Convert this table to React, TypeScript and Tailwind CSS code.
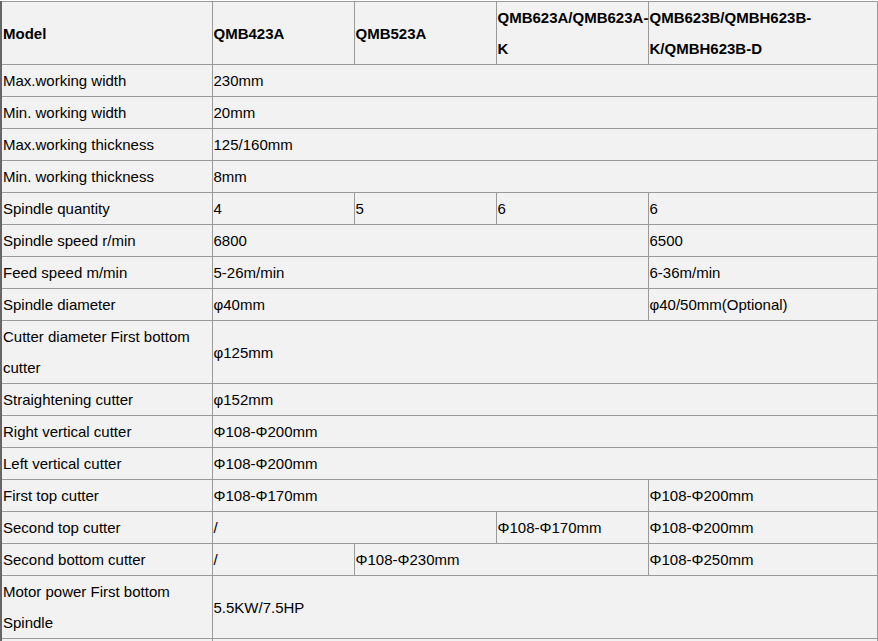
import React from "react";

type Cell = { t: React.ReactNode; span?: number };
type Row = { label: React.ReactNode; cells: Cell[]; h?: string };

const rows: Row[] = [
  { label: "Max.working width", cells: [{ t: "230mm", span: 4 }] },
  { label: "Min. working width", cells: [{ t: "20mm", span: 4 }] },
  { label: "Max.working thickness", cells: [{ t: "125/160mm", span: 4 }] },
  { label: "Min. working thickness", cells: [{ t: "8mm", span: 4 }] },
  { label: "Spindle quantity", cells: [{ t: "4" }, { t: "5" }, { t: "6" }, { t: "6" }] },
  { label: "Spindle speed r/min", cells: [{ t: "6800", span: 3 }, { t: "6500" }] },
  { label: "Feed speed m/min", cells: [{ t: "5-26m/min", span: 3 }, { t: "6-36m/min" }] },
  { label: "Spindle diameter", cells: [{ t: "φ40mm", span: 3 }, { t: "φ40/50mm(Optional)" }] },
  {
    label: (
      <>
        Cutter diameter First bottom
        <br />
        cutter
      </>
    ),
    cells: [{ t: "φ125mm", span: 4 }],
  },
  { label: "Straightening cutter", cells: [{ t: "φ152mm", span: 4 }] },
  { label: "Right vertical cutter", cells: [{ t: "Φ108-Φ200mm", span: 4 }] },
  { label: "Left vertical cutter", cells: [{ t: "Φ108-Φ200mm", span: 4 }] },
  { label: "First top cutter", cells: [{ t: "Φ108-Φ170mm", span: 3 }, { t: "Φ108-Φ200mm" }] },
  {
    label: "Second top cutter",
    cells: [{ t: "/", span: 2 }, { t: "Φ108-Φ170mm" }, { t: "Φ108-Φ200mm" }],
  },
  {
    label: "Second bottom cutter",
    cells: [{ t: "/" }, { t: "Φ108-Φ230mm", span: 2 }, { t: "Φ108-Φ250mm" }],
  },
  {
    label: (
      <>
        Motor power First bottom
        <br />
        Spindle
      </>
    ),
    cells: [{ t: "5.5KW/7.5HP", span: 4 }],
  },
  { label: "\u00a0", cells: [{ t: "\u00a0", span: 4 }] },
];

const td = "border border-[#9a9a9a] p-0 pl-px align-middle leading-[31px] whitespace-nowrap";

export default function App() {
  return (
    <div className="w-[878px] h-[641px] overflow-hidden bg-white">
      <table
        className="border-collapse bg-[#f2f2f2] text-black text-[15px] mt-px"
        style={{ fontFamily: '"Liberation Sans", Arial, sans-serif', width: 876, tableLayout: "fixed" }}
      >
        <colgroup>
          <col className="w-[211px]" />
          <col className="w-[142px]" />
          <col className="w-[142px]" />
          <col className="w-[152px]" />
          <col className="w-[229px]" />
        </colgroup>
        <tbody>
          <tr className="font-bold">
            <td className={`${td} border-l-2 border-l-[#666] pl-[3px]`}>Model</td>
            <td className={td}>QMB423A</td>
            <td className={td}>QMB523A</td>
            <td className={td}>
              QMB623A/QMB623A-
              <br />K
            </td>
            <td className={td}>
              QMB623B/QMBH623B-
              <br />
              K/QMBH623B-D
            </td>
          </tr>
          {rows.map((r, i) => (
            <tr key={i}>
              <td className={`${td} border-l-2 border-l-[#666] pl-[3px]`}>{r.label}</td>
              {r.cells.map((c, j) => (
                <td key={j} colSpan={c.span ?? 1} className={td}>
                  {c.t}
                </td>
              ))}
            </tr>
          ))}
        </tbody>
      </table>
    </div>
  );
}
